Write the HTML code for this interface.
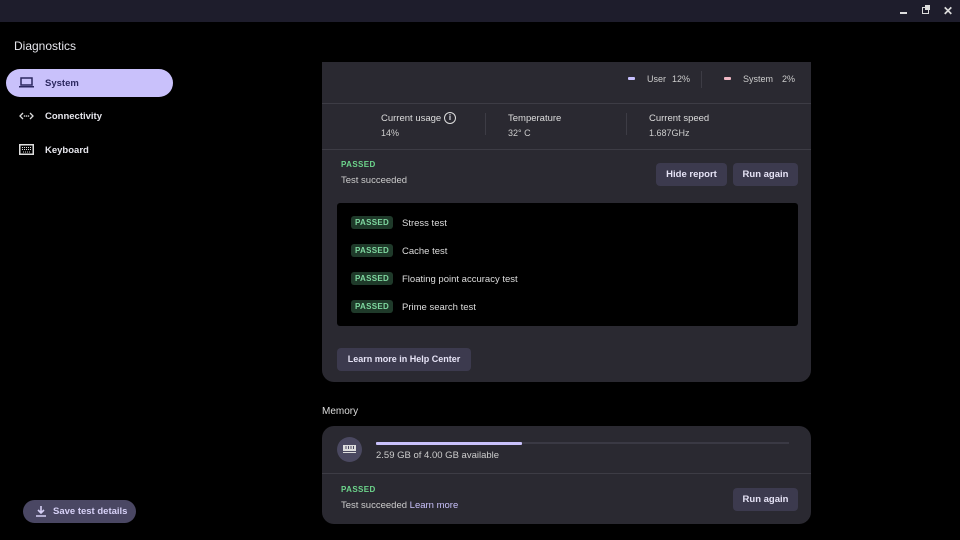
<!DOCTYPE html>
<html><head><style>
*{margin:0;padding:0;box-sizing:border-box}
body{width:960px;height:540px;background:#000;font-family:"Liberation Sans",sans-serif;color:#e3e3ea;position:relative;overflow:hidden;font-size:9.5px}
.abs{position:absolute}
.tb{left:0;top:0;width:960px;height:22px;background:#1e1d2c}
.card{background:#2a2931;border-radius:12px}
.btn{position:absolute;background:#3c3a4e;border-radius:4px;color:#e6e3f6;font-size:9.5px;font-weight:bold;text-align:center;line-height:22px}
.passed{color:#6dd58c;font-size:8px;font-weight:bold;letter-spacing:.4px}
.pill{background:#1f3a2a;color:#7fd8a0;font-size:8px;font-weight:bold;border-radius:3px;padding:2px 4px;letter-spacing:.3px}
.nav{position:absolute;left:6px;width:167px;height:28px;font-size:9.5px;font-weight:bold;line-height:28px;padding-left:39px}
</style></head><body>
<div class="abs tb"></div>
<div class="abs" style="left:900px;top:12px;width:7px;height:1.5px;background:#ddd"></div>
<div class="abs" style="left:922px;top:7px;width:7px;height:7px;border:1.5px solid #ddd;background:#1e1d2c"></div>
<div class="abs" style="left:925px;top:5px;width:5px;height:5px;background:#ddd"></div>
<div class="abs" style="left:943px;top:4px;color:#ddd;font-size:12px;font-weight:bold">✕</div>

<div class="abs" style="left:14px;top:39px;font-size:12px;color:#e6e6ec">Diagnostics</div>
<div class="nav" style="top:69px;background:#c9c1fb;border-radius:14px;color:#2c2860;line-height:29px">System</div>
<svg class="abs" style="left:19px;top:77px" width="15" height="11"><rect x="2" y="1" width="11" height="7" fill="none" stroke="#2c2860" stroke-width="1.5"/><rect x="0" y="9" width="15" height="1.5" fill="#2c2860"/></svg>
<div class="nav" style="top:103px;color:#e6e6ec">Connectivity</div>
<svg class="abs" style="left:19px;top:112px" width="15" height="8"><path d="M4 1L1 4l3 3M11 1l3 3-3 3" stroke="#ddd" stroke-width="1.3" fill="none"/><circle cx="5.5" cy="4" r=".8" fill="#ddd"/><circle cx="7.5" cy="4" r=".8" fill="#ddd"/><circle cx="9.5" cy="4" r=".8" fill="#ddd"/></svg>
<div class="nav" style="top:137px;color:#e6e6ec">Keyboard</div>
<svg class="abs" style="left:19px;top:144px" width="15" height="11"><rect x=".75" y=".75" width="13.5" height="9.5" fill="none" stroke="#ddd" stroke-width="1.5"/><path d="M3 3.5h9M3 5.5h9M4 8h7" stroke="#ddd" stroke-width="1" stroke-dasharray="1 1"/></svg>

<div class="abs" style="left:23px;top:500px;width:113px;height:23px;background:#4a4763;border-radius:12px;color:#d6d0f6;font-weight:bold;line-height:23px;padding-left:30px;font-size:9.5px">Save test details</div>
<svg class="abs" style="left:36px;top:506px" width="10" height="11"><path d="M5 0v7M2 4l3 3 3-3M0 10h10" stroke="#d6d0f6" stroke-width="1.6" fill="none"/></svg>

<div class="abs card" style="left:322px;top:62px;width:489px;height:320px;border-radius:0 0 12px 12px"></div>
<div class="abs" style="left:628px;top:77px;width:7px;height:3px;background:#c8c0ff;border-radius:1px"></div>
<div class="abs" style="left:647px;top:74px;color:#ccc;font-size:9px">User</div>
<div class="abs" style="left:672px;top:74px;color:#ccc;font-size:9px">12%</div>
<div class="abs" style="left:701px;top:71px;width:1px;height:17px;background:#3d3c45"></div>
<div class="abs" style="left:724px;top:77px;width:7px;height:3px;background:#f0b8c4;border-radius:1px"></div>
<div class="abs" style="left:743px;top:74px;color:#ccc;font-size:9px">System</div>
<div class="abs" style="left:782px;top:74px;color:#ccc;font-size:9px">2%</div>
<div class="abs" style="left:322px;top:103px;width:489px;height:1px;background:#3d3c45"></div>
<div class="abs" style="left:381px;top:113px;color:#ddd">Current usage</div>
<div class="abs" style="left:444px;top:112px;width:12px;height:12px;border:1.3px solid #ddd;border-radius:50%;font-size:8px;text-align:center;line-height:9px;font-weight:bold">i</div>
<div class="abs" style="left:381px;top:128px;color:#ccc;font-size:9px">14%</div>
<div class="abs" style="left:485px;top:113px;width:1px;height:22px;background:#3d3c45"></div>
<div class="abs" style="left:508px;top:113px;color:#ddd">Temperature</div>
<div class="abs" style="left:508px;top:128px;color:#ccc;font-size:9px">32° C</div>
<div class="abs" style="left:626px;top:113px;width:1px;height:22px;background:#3d3c45"></div>
<div class="abs" style="left:649px;top:113px;color:#ddd">Current speed</div>
<div class="abs" style="left:649px;top:128px;color:#ccc;font-size:9px">1.687GHz</div>
<div class="abs" style="left:322px;top:149px;width:489px;height:1px;background:#3d3c45"></div>
<div class="abs passed" style="left:341px;top:160px">PASSED</div>
<div class="abs" style="left:341px;top:175px;color:#ccc">Test succeeded</div>
<div class="btn" style="left:656px;top:163px;width:71px;line-height:23px">Hide report</div>
<div class="btn" style="left:733px;top:163px;width:65px;line-height:23px">Run again</div>
<div class="abs" style="left:337px;top:203px;width:461px;height:123px;background:#000;border-radius:3px"></div>
<div class="abs pill" style="left:351px;top:216px">PASSED</div><div class="abs" style="left:402px;top:218px;color:#ddd">Stress test</div>
<div class="abs pill" style="left:351px;top:244px">PASSED</div><div class="abs" style="left:402px;top:246px;color:#ddd">Cache test</div>
<div class="abs pill" style="left:351px;top:272px">PASSED</div><div class="abs" style="left:402px;top:274px;color:#ddd">Floating point accuracy test</div>
<div class="abs pill" style="left:351px;top:300px">PASSED</div><div class="abs" style="left:402px;top:302px;color:#ddd">Prime search test</div>
<div class="btn" style="left:337px;top:348px;width:134px;line-height:23px;font-size:9px">Learn more in Help Center</div>

<div class="abs" style="left:322px;top:406px;font-size:10px;color:#ddd">Memory</div>
<div class="abs card" style="left:322px;top:426px;width:489px;height:98px"></div>
<div class="abs" style="left:337px;top:437px;width:25px;height:25px;border-radius:50%;background:#4a4860"></div>
<svg class="abs" style="left:343px;top:445px" width="13" height="8"><rect x="0" y="0" width="13" height="6" fill="#ddd"/><path d="M3 1v3M5.5 1v3M8 1v3M10.5 1v3" stroke="#4a4860"/><path d="M0 7.5h13" stroke="#ddd"/></svg>
<div class="abs" style="left:376px;top:442px;width:413px;height:2px;background:#3a3944"></div>
<div class="abs" style="left:376px;top:442px;width:146px;height:3px;background:#c9c1fb;border-radius:1px"></div>
<div class="abs" style="left:376px;top:450px;color:#ccc">2.59 GB of 4.00 GB available</div>
<div class="abs" style="left:322px;top:473px;width:489px;height:1px;background:#3d3c45"></div>
<div class="abs passed" style="left:341px;top:485px">PASSED</div>
<div class="abs" style="left:341px;top:500px;color:#ccc">Test succeeded <span style="color:#c9c1fb">Learn more</span></div>
<div class="btn" style="left:733px;top:488px;width:65px;line-height:23px">Run again</div>
</body></html>
